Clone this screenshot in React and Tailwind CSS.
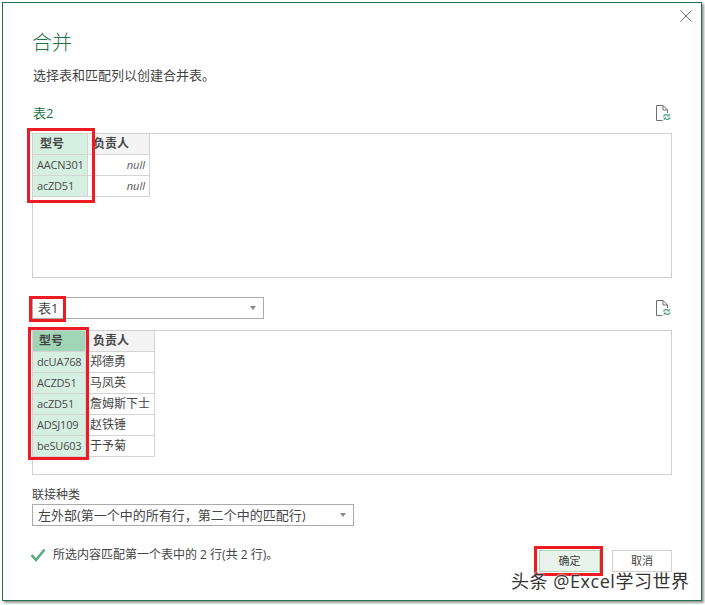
import React from "react";

const FONT = "font-['Open_Sans','Noto_Sans_CJK_SC',sans-serif]";
const COMBO = "flex items-center justify-between h-[22px] border border-[#ababab] bg-white pl-[5px] pr-[7px] text-[13px] leading-none text-[#444]";
const MARK = "absolute border-[3px] border-[#ed1c24] pointer-events-none";

const topRows = [
  ["AACN301", "null"],
  ["acZD51", "null"],
];
const bottomRows = [
  ["dcUA768", "郑德勇"],
  ["ACZD51", "马凤英"],
  ["acZD51", "詹姆斯下士"],
  ["ADSJ109", "赵铁锤"],
  ["beSU603", "于予菊"],
];

function FileRefresh() {
  return (
    <svg width="16" height="17" viewBox="0 0 16 17" fill="none">
      <path d="M7.5 15.5H1.5V.5H8L12.5 5V8M8 .5V5H12.5" stroke="#6f6f6f" />
      <path d="M8.5 11.5C9 9.5 12 9 13.5 10.5M15 12.5C14.5 14.5 11.5 15 10 13.5" stroke="#5aab84" strokeWidth="1.4" />
      <path d="M14.8 8.5V11.5H12ZM8.7 15.5V12.5H11.5Z" fill="#5aab84" />
    </svg>
  );
}

function Caret() {
  return <span className="w-0 h-0 border-x-[3.5px] border-x-transparent border-t-[4px] border-t-[#888]" />;
}

function Preview({ rows, keyHead, nameHead, w1, w2, italic }) {
  const c1 = "flex items-center h-[21px] border-r border-b border-[#d4d4d4] bg-[#d5efe1] pl-[4px] text-[11px] tracking-[-0.2px] text-[#4a4a4a]";
  const c2 = "flex items-center h-[21px] border-r border-b border-[#d4d4d4] bg-white";
  return (
    <div className="grid" style={{ gridTemplateColumns: `${w1}px ${w2}px` }}>
      <div className={`flex items-center h-[21px] border-r border-b border-[#d4d4d4] text-[12px] font-bold text-[#444] ${keyHead}`}>型号</div>
      <div className={`flex items-center h-[21px] border-r border-b border-[#d4d4d4] bg-[#f4f4f4] text-[12px] font-bold text-[#444] ${nameHead}`}>负责人</div>
      {rows.map(([code, who]) => (
        <React.Fragment key={code}>
          <div className={c1}>{code}</div>
          {italic ? (
            <div className={`${c2} justify-end pr-[4px] text-[11px] italic text-[#555]`}>{who}</div>
          ) : (
            <div className={`${c2} pl-[4px] text-[12px] text-[#444] whitespace-nowrap`}>{who}</div>
          )}
        </React.Fragment>
      ))}
    </div>
  );
}

export default function App() {
  return (
    <div className={`relative w-[705px] h-[605px] bg-white overflow-hidden ${FONT}`}>
      <div className="absolute left-[2px] top-[2px] w-[700px] h-[599px] border border-[#217346] bg-white shadow-[2px_2px_2px_#9a9a9a] px-[29px] flex flex-col">
        <h1 className="mt-[28px] h-[24px] text-[20px] font-light leading-[24px] text-[#217346]">合并</h1>
        <p className="mt-[11px] ml-[1px] h-[18px] text-[13px] leading-[18px] text-[#444]">选择表和匹配列以创建合并表。</p>

        <div className="mt-[20px] h-[29px] flex items-start justify-between">
          <span className="ml-[1px] text-[13px] leading-[18px] text-[#217346]">表2</span>
          <span className="mr-[1px] mt-[1px]"><FileRefresh /></span>
        </div>
        <div className="h-[145px] border border-[#d0d0d0]">
          <Preview rows={topRows} keyHead="bg-[#d5efe1] pl-[7px]" nameHead="pl-[5px]" w1={55} w2={62} italic />
        </div>

        <div className="mt-[19px] h-[22px] flex items-center justify-between">
          <div className={`${COMBO} w-[232px]`}>
            <span>表1</span>
            <Caret />
          </div>
          <span className="mr-[1px] mt-[1px]"><FileRefresh /></span>
        </div>
        <div className="mt-[11px] h-[145px] border border-[#d0d0d0]">
          <Preview rows={bottomRows} keyHead="bg-[#a0d5b5] pl-[6px]" nameHead="pl-[7px]" w1={53} w2={69} />
        </div>

        <label className="mt-[11px] h-[18px] text-[12px] leading-[18px] text-[#444]">联接种类</label>
        <div className={`${COMBO} w-[322px]`}>
          <span>左外部(第一个中的所有行，第二个中的匹配行)</span>
          <Caret />
        </div>

        <div className="mt-[24px] flex items-start justify-between">
          <div className="flex items-center h-[18px] -ml-[2px] -mt-[4px]">
            <svg width="16" height="14" viewBox="0 0 16 14" fill="none">
              <path d="M1.5 7L6 12L14.5 1.5" stroke="#5aab84" strokeWidth="2.6" />
            </svg>
            <span className="ml-[7px] text-[12px] leading-[18px] text-[#444]">所选内容匹配第一个表中的 2 行(共 2 行)。</span>
          </div>
          <div className="flex gap-[12px]">
            <button className="w-[61px] h-[22px] border border-[#a6d8b9] bg-[#e8f3ec] text-[11px] text-[#444]">确定</button>
            <button className="w-[60px] h-[22px] border border-[#d0d0d0] bg-white text-[11px] text-[#444]">取消</button>
          </div>
        </div>
      </div>

      <svg className="absolute left-[680px] top-[10px]" width="12" height="12" viewBox="0 0 12 12" stroke="#6f6f6f">
        <path d="M.5 .5L11.5 11.5M11.5 .5L.5 11.5" />
      </svg>

      <div className={`${MARK} left-[27px] top-[128px] w-[68px] h-[75px]`} />
      <div className={`${MARK} left-[29px] top-[296px] w-[37px] h-[26px]`} />
      <div className={`${MARK} left-[28px] top-[327px] w-[61px] h-[133px]`} />
      <div className={`${MARK} left-[534px] top-[546px] w-[69px] h-[30px]`} />

      <div className="absolute left-[511px] top-[569px] text-[18px] tracking-[0.55px] leading-[24px] text-[#333] whitespace-nowrap [text-shadow:0_0_2px_#fff,0_0_2px_#fff]">
        头条 @Excel学习世界
      </div>
    </div>
  );
}
